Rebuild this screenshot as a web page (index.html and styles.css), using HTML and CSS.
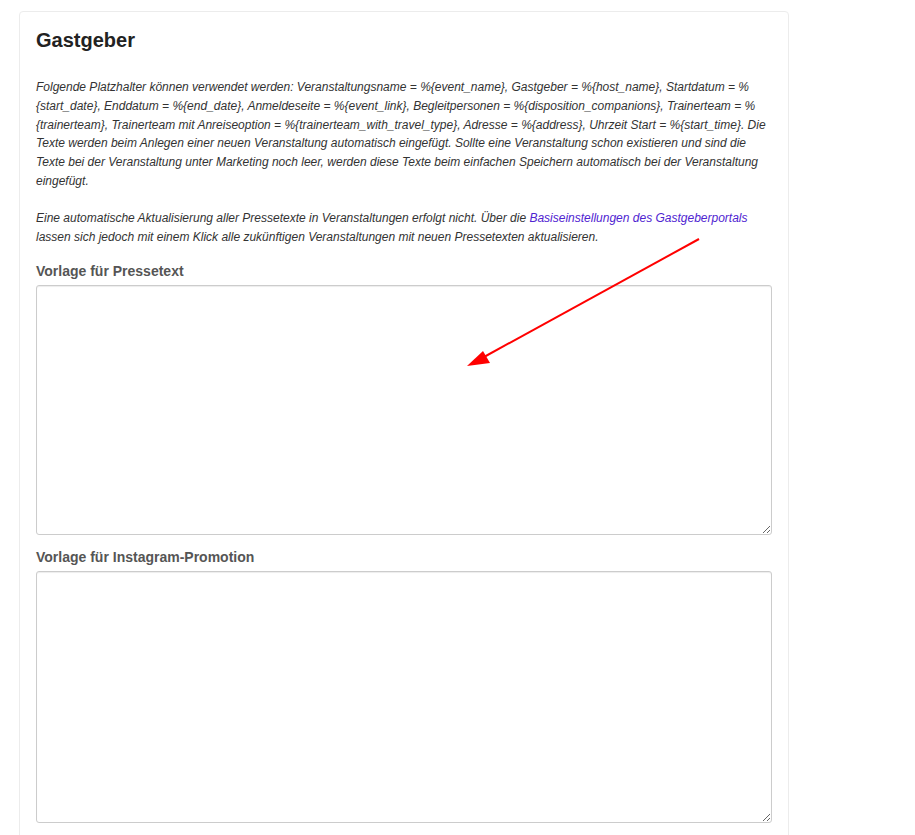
FILE: index.html
```html
<!DOCTYPE html>
<html lang="de">
<head>
<meta charset="utf-8">
<title>Gastgeber</title>
<link rel="stylesheet" href="styles.css">
</head>
<body>
<div class="page">
  <div class="card">
    <h2 class="title">Gastgeber</h2>
    <p class="hint">Folgende Platzhalter können verwendet werden: Veranstaltungsname = %{event_name}, Gastgeber = %{host_name}, Startdatum = %{start_date}, Enddatum = %{end_date}, Anmeldeseite = %{event_link}, Begleitpersonen = %{disposition_companions}, Trainerteam = %{trainerteam}, Trainerteam mit Anreiseoption = %{trainerteam_with_travel_type}, Adresse = %{address}, Uhrzeit Start = %{start_time}. Die Texte werden beim Anlegen einer neuen Veranstaltung automatisch eingefügt. Sollte eine Veranstaltung schon existieren und sind die Texte bei der Veranstaltung unter Marketing noch leer, werden diese Texte beim einfachen Speichern automatisch bei der Veranstaltung eingefügt.</p>
    <p class="hint hint-second">Eine automatische Aktualisierung aller Pressetexte in Veranstaltungen erfolgt nicht. Über die <a class="link" href="#">Basiseinstellungen des Gastgeberportals</a> lassen sich jedoch mit einem Klick alle zukünftigen Veranstaltungen mit neuen Pressetexten aktualisieren.</p>
    <div class="group">
      <label class="label" for="press">Vorlage für Pressetext</label>
      <textarea class="field" id="press"></textarea>
    </div>
    <div class="group">
      <label class="label" for="insta">Vorlage für Instagram-Promotion</label>
      <textarea class="field field-tall" id="insta"></textarea>
    </div>
  </div>
</div>
<svg class="arrow" width="915" height="835" viewBox="0 0 915 835">
  <line x1="699" y1="239" x2="484" y2="357" stroke="#ff0000" stroke-width="2"/>
  <polygon points="467,366 483,351 490,363" fill="#ff0000"/>
</svg>
</body>
</html>
```

FILE: styles.css
```css
html, body {
  margin: 0;
  padding: 0;
  background: #ffffff;
}
body {
  font-family: "Liberation Sans", Arial, sans-serif;
  color: #333333;
  overflow: hidden;
  height: 835px;
}
.page {
  padding: 11px 0 0 19px;
}
.card {
  box-sizing: border-box;
  width: 770px;
  min-height: 900px;
  border: 1px solid #ececec;
  border-radius: 4px;
  padding: 17px 16px 16px 16px;
  background: #fff;
}
.title {
  margin: 0 0 27px 0;
  font-size: 20px;
  line-height: 22px;
  font-weight: bold;
  color: #222222;
}
.hint {
  margin: 0;
  font-size: 12px;
  line-height: 18.8px;
  font-style: italic;
  color: #333333;
}
.hint-second {
  margin-top: 18px;
}
.link {
  color: #4f24d1;
  text-decoration: none;
}
.group {
  display: flex;
  flex-direction: column;
  margin-top: 15px;
}
.group + .group {
  margin-top: 12px;
}
.label {
  font-size: 14px;
  line-height: 20px;
  font-weight: bold;
  color: #555555;
  margin-bottom: 4px;
}
.field {
  box-sizing: border-box;
  width: 736px;
  height: 250px;
  border: 1px solid #cccccc;
  border-radius: 3px;
  box-shadow: inset 0 1px 1px rgba(0,0,0,0.075);
  margin: 0;
  padding: 6px 12px;
  font-family: "Liberation Sans", Arial, sans-serif;
  font-size: 14px;
  resize: vertical;
}
.field-tall {
  height: 252px;
}
.arrow {
  position: absolute;
  left: 0;
  top: 0;
  pointer-events: none;
}
```
